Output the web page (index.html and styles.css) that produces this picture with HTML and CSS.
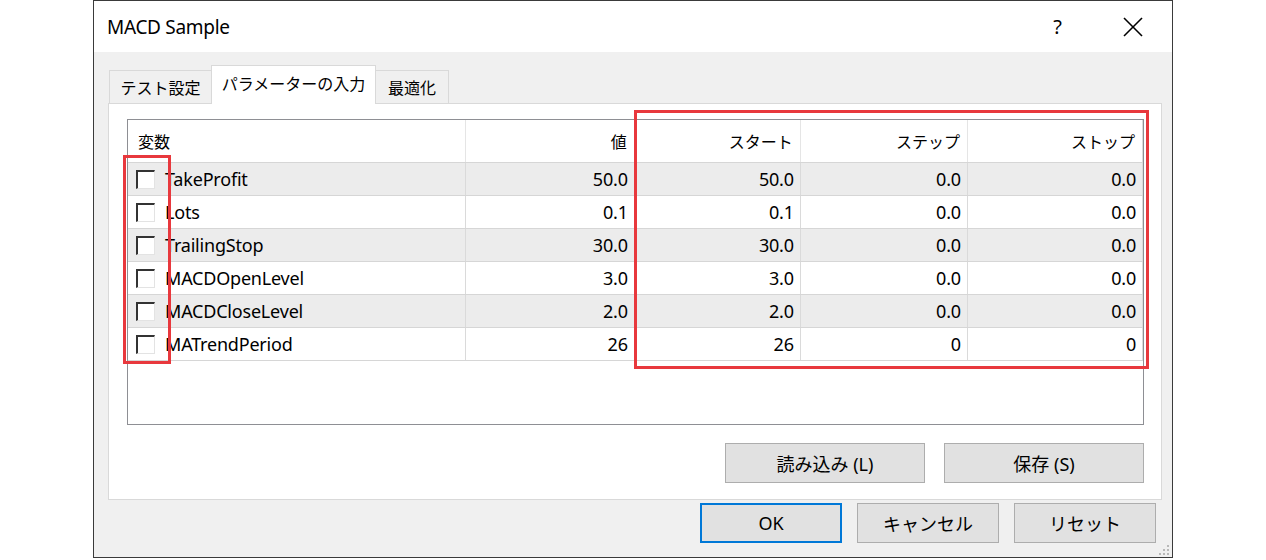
FILE: index.html
```html
<!DOCTYPE html>
<html lang="ja">
<head>
    <meta charset="UTF-8">
    <title>MACD Sample</title>
    <link rel="stylesheet" href="styles.css">
</head>
<body>
    <div class="stage">
        <div class="dialog">
            <div class="titlebar">
                <span class="title">MACD Sample</span>
                <div class="title-buttons">
                    <span class="help">?</span>
                    <svg class="close" width="20" height="20" viewBox="0 0 20 20">
                        <line x1="1" y1="1" x2="19" y2="19" stroke="#000" stroke-width="1.6"></line>
                        <line x1="19" y1="1" x2="1" y2="19" stroke="#000" stroke-width="1.6"></line>
                    </svg>
                </div>
            </div>

            <div class="dialog-body">
                <div class="tabs">
                    <div class="tab tab-first">テスト設定</div>
                    <div class="tab tab-active">パラメーターの入力</div>
                    <div class="tab tab-last">最適化</div>
                </div>

                <div class="panel">
                    <div class="listbox">
                        <table class="params">
                            <colgroup>
                                <col class="col-name">
                                <col class="col-value">
                                <col class="col-start">
                                <col class="col-step">
                                <col class="col-stop">
                            </colgroup>
                            <thead>
                                <tr>
                                    <th class="name-head">変数</th>
                                    <th>値</th>
                                    <th>スタート</th>
                                    <th>ステップ</th>
                                    <th>ストップ</th>
                                </tr>
                            </thead>
                            <tbody>
                                <tr class="shade">
                                    <td class="name"><span class="check"></span>TakeProfit</td>
                                    <td>50.0</td><td>50.0</td><td>0.0</td><td>0.0</td>
                                </tr>
                                <tr>
                                    <td class="name"><span class="check"></span>Lots</td>
                                    <td>0.1</td><td>0.1</td><td>0.0</td><td>0.0</td>
                                </tr>
                                <tr class="shade">
                                    <td class="name"><span class="check"></span>TrailingStop</td>
                                    <td>30.0</td><td>30.0</td><td>0.0</td><td>0.0</td>
                                </tr>
                                <tr>
                                    <td class="name"><span class="check"></span>MACDOpenLevel</td>
                                    <td>3.0</td><td>3.0</td><td>0.0</td><td>0.0</td>
                                </tr>
                                <tr class="shade">
                                    <td class="name"><span class="check"></span>MACDCloseLevel</td>
                                    <td>2.0</td><td>2.0</td><td>0.0</td><td>0.0</td>
                                </tr>
                                <tr>
                                    <td class="name"><span class="check"></span>MATrendPeriod</td>
                                    <td>26</td><td>26</td><td>0</td><td>0</td>
                                </tr>
                            </tbody>
                        </table>
                    </div>

                    <div class="panel-buttons">
                        <button class="btn btn-wide">読み込み (L)</button>
                        <button class="btn btn-wide">保存 (S)</button>
                    </div>
                </div>

                <div class="dialog-buttons">
                    <button class="btn btn-default">OK</button>
                    <button class="btn">キャンセル</button>
                    <button class="btn">リセット</button>
                </div>
            </div>

            <svg class="grip" width="12" height="12" viewBox="0 0 12 12">
                <rect x="9" y="1" width="2" height="2" fill="#b8b8b8"></rect>
                <rect x="5" y="5" width="2" height="2" fill="#b8b8b8"></rect>
                <rect x="9" y="5" width="2" height="2" fill="#b8b8b8"></rect>
                <rect x="1" y="9" width="2" height="2" fill="#b8b8b8"></rect>
                <rect x="5" y="9" width="2" height="2" fill="#b8b8b8"></rect>
                <rect x="9" y="9" width="2" height="2" fill="#b8b8b8"></rect>
            </svg>
        </div>

        <div class="mark mark-checks"></div>
        <div class="mark mark-range"></div>
    </div>
</body>
</html>
```

FILE: styles.css
```css
* {
    margin: 0;
    padding: 0;
    box-sizing: border-box;
}

body {
    font-family: "Noto Sans", "Noto Sans CJK JP", sans-serif;
    background-color: white;
    color: #000;
    width: 1266px;
    height: 560px;
    overflow: hidden;
}

.stage {
    position: relative;
    width: 1266px;
    height: 560px;
}

.dialog {
    position: relative;
    margin-left: 93px;
    width: 1080px;
    height: 558px;
    border: 1px solid #3a3a3a;
    background-color: #f0f0f0;
    display: flex;
    flex-direction: column;
}

.titlebar {
    height: 51px;
    background-color: white;
    display: flex;
    align-items: center;
    justify-content: space-between;
    padding-left: 13px;
    padding-right: 29px;
}

.title {
    font-size: 19px;
    letter-spacing: -0.3px;
}

.title-buttons {
    display: flex;
    align-items: center;
    gap: 61px;
}

.help {
    font-size: 20px;
    line-height: 1;
}

.close {
    display: block;
}

.dialog-body {
    padding: 13px 10px 0 14px;
}

.tabs {
    display: flex;
    align-items: flex-end;
    height: 38px;
    padding-left: 1px;
    position: relative;
    z-index: 1;
}

.tab {
    font-family: "Noto Sans CJK JP", sans-serif;
    font-size: 16px;
    height: 33px;
    display: flex;
    align-items: center;
    justify-content: center;
    border: 1px solid #d9d9d9;
    border-bottom: none;
    background-color: #f0f0f0;
}

.tab-first {
    width: 102px;
    border-right: none;
}

.tab-active {
    width: 165px;
    height: 39px;
    margin-bottom: -1px;
    background-color: white;
    padding-bottom: 4px;
}

.tab-last {
    width: 73px;
    border-left: none;
}

.panel {
    height: 397px;
    background-color: white;
    border: 1px solid #d9d9d9;
    padding: 15px 17px 0 18px;
}

.listbox {
    height: 306px;
    border: 1px solid #8e8f94;
    background-color: white;
    overflow: hidden;
}

.params {
    width: 100%;
    border-collapse: collapse;
    table-layout: fixed;
    font-size: 18px;
}

.col-name { width: 337px; }
.col-value { width: 169px; }
.col-start { width: 166px; }
.col-step { width: 167px; }
.col-stop { width: 175px; }

.params th {
    font-family: "Noto Sans CJK JP", sans-serif;
    font-weight: normal;
    font-size: 16px;
    height: 42px;
    text-align: right;
    padding: 0 7px 0 0;
    border-right: 1px solid #e5e5e5;
    border-bottom: 1px solid #d6d6d6;
}

.params th.name-head {
    text-align: left;
    padding-left: 10px;
}

.params td {
    height: 33px;
    text-align: right;
    padding: 0 6px 0 0;
    border-right: 1px solid #dadada;
    border-bottom: 1px solid #d6d6d6;
    white-space: nowrap;
    letter-spacing: -0.2px;
}

.params th:last-child,
.params td:last-child {
    border-right: 1px solid #dadada;
}

.params tr.shade td {
    background-color: #ececec;
}

.params td.name {
    text-align: left;
    padding-left: 8px;
}

.check {
    display: inline-block;
    width: 19px;
    height: 19px;
    margin-right: 10px;
    vertical-align: -3px;
    background-color: white;
    border-top: 2px solid #333;
    border-left: 2px solid #333;
    border-right: 1px solid #e3e3e3;
    border-bottom: 1px solid #e3e3e3;
}

.panel-buttons {
    display: flex;
    justify-content: flex-end;
    gap: 19px;
    margin-top: 18px;
}

.btn {
    font-family: "Noto Sans", "Noto Sans CJK JP", sans-serif;
    font-size: 18px;
    color: #000;
    background-color: #e1e1e1;
    border: 1px solid #adadad;
    width: 142px;
    height: 40px;
}

.btn-wide {
    width: 200px;
}

.btn-default {
    border: 2px solid #0078d7;
}

.dialog-buttons {
    display: flex;
    justify-content: flex-end;
    gap: 15px;
    margin-top: 3px;
    padding-right: 6px;
}

.grip {
    position: absolute;
    right: 2px;
    bottom: 1px;
}

.mark {
    position: absolute;
    border: 3px solid #e8383d;
}

.mark-checks {
    left: 123px;
    top: 155px;
    width: 48px;
    height: 209px;
}

.mark-range {
    left: 634px;
    top: 110px;
    width: 515px;
    height: 259px;
}
```
